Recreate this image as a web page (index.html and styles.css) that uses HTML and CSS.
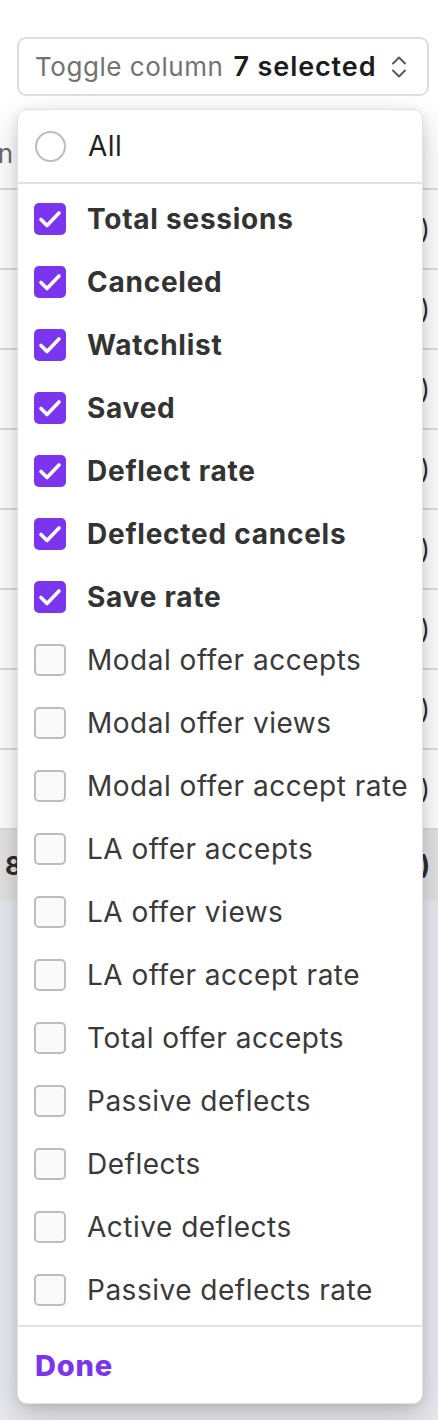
FILE: index.html
```html
<!DOCTYPE html>
<html>
<head>
<meta charset="utf-8">
<link rel="stylesheet" href="styles.css">
</head>
<body>
<div class="page">
  <div class="toolbar">
    <button class="trigger" type="button">
      <span class="trigger-label">Toggle column</span>
      <span class="trigger-value">7 selected</span>
      <svg class="trigger-icon" viewBox="0 0 16 24" aria-hidden="true">
        <polyline points="2,8.5 8,2.5 14,8.5" />
        <polyline points="2,15.5 8,21.5 14,15.5" />
      </svg>
    </button>
  </div>

  <div class="table">
    <div class="row row-head"><span class="cell-first-head"><span>Plan</span></span></div>
    <div class="row"><span class="cell-first">4</span><span class="cell-last">(6)</span></div>
    <div class="row"><span class="cell-first">1</span><span class="cell-last">(5)</span></div>
    <div class="row"><span class="cell-first">9</span><span class="cell-last">(5)</span></div>
    <div class="row"><span class="cell-first">7</span><span class="cell-last">(3)</span></div>
    <div class="row"><span class="cell-first">6</span><span class="cell-last">(4)</span></div>
    <div class="row"><span class="cell-first">5</span><span class="cell-last">(2)</span></div>
    <div class="row"><span class="cell-first">4</span><span class="cell-last">(4)</span></div>
    <div class="row"><span class="cell-first">2</span><span class="cell-last">(1)</span></div>
    <div class="row row-foot"><span class="cell-first-foot">8</span><span class="cell-last">(9)</span></div>
  </div>

  <div class="menu">
    <div class="menu-head">
      <span class="radio"></span>
      <span class="menu-all">All</span>
    </div>
    <div class="menu-list">
      <div class="item on"><span class="box on"><svg viewBox="0 0 32 32"><polyline points="7,16.5 13,22.5 25,10"/></svg></span>Total sessions</div>
      <div class="item on"><span class="box on"><svg viewBox="0 0 32 32"><polyline points="7,16.5 13,22.5 25,10"/></svg></span>Canceled</div>
      <div class="item on"><span class="box on"><svg viewBox="0 0 32 32"><polyline points="7,16.5 13,22.5 25,10"/></svg></span>Watchlist</div>
      <div class="item on"><span class="box on"><svg viewBox="0 0 32 32"><polyline points="7,16.5 13,22.5 25,10"/></svg></span>Saved</div>
      <div class="item on"><span class="box on"><svg viewBox="0 0 32 32"><polyline points="7,16.5 13,22.5 25,10"/></svg></span>Deflect rate</div>
      <div class="item on"><span class="box on"><svg viewBox="0 0 32 32"><polyline points="7,16.5 13,22.5 25,10"/></svg></span>Deflected cancels</div>
      <div class="item on"><span class="box on"><svg viewBox="0 0 32 32"><polyline points="7,16.5 13,22.5 25,10"/></svg></span>Save rate</div>
      <div class="item"><span class="box"></span>Modal offer accepts</div>
      <div class="item"><span class="box"></span>Modal offer views</div>
      <div class="item"><span class="box"></span>Modal offer accept rate</div>
      <div class="item"><span class="box"></span>LA offer accepts</div>
      <div class="item"><span class="box"></span>LA offer views</div>
      <div class="item"><span class="box"></span>LA offer accept rate</div>
      <div class="item"><span class="box"></span>Total offer accepts</div>
      <div class="item"><span class="box"></span>Passive deflects</div>
      <div class="item"><span class="box"></span>Deflects</div>
      <div class="item"><span class="box"></span>Active deflects</div>
      <div class="item"><span class="box"></span>Passive deflects rate</div>
    </div>
    <div class="menu-foot">
      <button class="done" type="button">Done</button>
    </div>
  </div>
</div>
</body>
</html>
```

FILE: styles.css
```css
* { box-sizing: border-box; }

html, body {
  margin: 0;
  width: 438px;
  height: 1420px;
  overflow: hidden;
}

body {
  font-family: Inter, "Noto Sans", "Liberation Sans", sans-serif;
  background: #e9eaef;
  color: #333;
}

.page {
  position: relative;
  background: #fff;
}

.toolbar {
  height: 118px;
  padding: 37px 0 0 17px;
}

.trigger {
  display: flex;
  align-items: center;
  width: 412px;
  height: 59px;
  margin: 0;
  padding: 0 20px 0 16px;
  border: 2px solid #dedede;
  border-radius: 9px;
  background: #fff;
  font-family: inherit;
  font-size: 26px;
  line-height: 1;
  white-space: nowrap;
}

.trigger-label {
  color: #727272;
  letter-spacing: 0.55px;
}

.trigger-value {
  margin-left: 10px;
  color: #1c1c1c;
  font-size: 27px;
  font-weight: 600;
  letter-spacing: 0.9px;
}

.trigger-icon {
  margin-left: auto;
  width: 16px;
  height: 24px;
  fill: none;
  stroke: #5a5a5a;
  stroke-width: 2;
  stroke-linecap: round;
  stroke-linejoin: round;
}

/* background table */
.table { font-size: 26px; }

.row {
  display: flex;
  align-items: center;
  height: 80px;
  border-top: 2px solid #dcdcdc;
  color: #2d2d2d;
  white-space: nowrap;
}

.row-head {
  height: 70px;
  border-top: none;
  color: #6b6b6b;
}

.row-foot {
  height: 72px;
  background: #e3e3e3;
  font-weight: 700;
}

.cell-first { padding-left: 16px; }
.cell-first-foot { padding-left: 5px; }

.cell-first-head {
  display: flex;
  justify-content: flex-end;
  width: 13px;
}

.cell-last {
  margin-left: auto;
  padding-right: 8px;
}

/* dropdown menu */
.menu {
  position: absolute;
  top: 109px;
  left: 17px;
  width: 406px;
  background: #fff;
  border: 1px solid #e2e2e2;
  border-radius: 10px;
  box-shadow: 0 12px 32px rgba(0, 0, 0, 0.2), 0 2px 10px rgba(0, 0, 0, 0.08);
  overflow: hidden;
}

.menu-head {
  display: flex;
  align-items: center;
  gap: 22px;
  height: 74px;
  padding-left: 17px;
  border-bottom: 2px solid #e3e3e3;
  font-size: 28px;
  letter-spacing: 0.5px;
  color: #1f1f1f;
}

.radio {
  width: 31px;
  height: 31px;
  border: 2px solid #bdbdbd;
  border-radius: 50%;
  background: #fff;
}

.menu-list { padding: 3.5px 0; }

.item {
  display: flex;
  align-items: center;
  gap: 21px;
  height: 63px;
  padding-left: 16px;
  font-size: 28px;
  letter-spacing: 0.5px;
  color: #3a3a3a;
  white-space: nowrap;
}

.item.on {
  font-weight: 700;
  letter-spacing: 0.75px;
  color: #333;
}

.box {
  flex: none;
  width: 32px;
  height: 32px;
  border: 2px solid #bdbdbd;
  border-radius: 5px;
  background: #fafafa;
}

.box.on {
  border: none;
  background: #7b35ee;
}

.box svg {
  display: block;
  width: 32px;
  height: 32px;
  fill: none;
  stroke: #fff;
  stroke-width: 3.6;
  stroke-linecap: round;
  stroke-linejoin: round;
}

.menu-foot {
  display: flex;
  align-items: center;
  height: 78px;
  padding-left: 17px;
  border-top: 2px solid #e3e3e3;
}

.done {
  margin: 0;
  padding: 0;
  border: none;
  background: none;
  font-family: inherit;
  font-size: 29px;
  font-weight: 800;
  letter-spacing: 0.8px;
  color: #7b35ee;
}
```
